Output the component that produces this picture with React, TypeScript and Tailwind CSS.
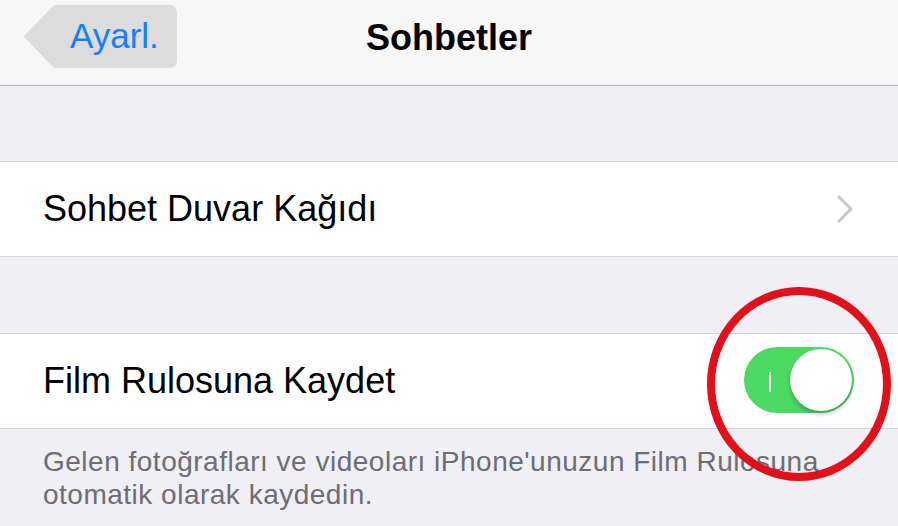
import React from "react";

export default function App() {
  return (
    <div
      className="relative w-[898px] h-[526px] overflow-hidden bg-[#efeff4]"
      style={{ fontFamily: '"Liberation Sans", Arial, sans-serif' }}
    >
      {/* Nav bar */}
      <div className="h-[86px] bg-[#f7f7f7] border-b border-[#b4b4b4] grid grid-cols-[1fr_auto_1fr] items-start pt-[5px]">
        <div className="pl-[22px]">
          <div className="relative w-[155px] h-[63px] flex items-center pl-[48px] pb-[2px]">
            <svg width="155" height="63" viewBox="0 0 155 63" className="absolute inset-0">
              <path
                d="M32 0 H147 Q155 0 155 8 V55 Q155 63 147 63 H32 L3 33 Q1 31.5 3 30 Z"
                fill="#dcdcdc"
              />
            </svg>
            <span className="relative text-[35px] leading-[40px] text-[#157efb]">Ayarl.</span>
          </div>
        </div>
        <span className="text-[36px] leading-[40px] font-bold text-black pt-[13px]">Sohbetler</span>
        <div />
      </div>

      <div className="flex flex-col pt-[75px] gap-[76px]">
        {/* Row 1 */}
        <div className="h-[96px] bg-white border-y border-[#d2d2d6] flex items-center justify-between pl-[43px] pr-[45px]">
          <span className="text-[36px] leading-[40px] text-black">Sohbet Duvar Kağıdı</span>
          <svg width="16" height="28" viewBox="0 0 16 28">
            <polyline
              points="2,2 14,14 2,26"
              fill="none"
              stroke="#c7c7cc"
              strokeWidth="3"
              strokeLinecap="round"
              strokeLinejoin="round"
            />
          </svg>
        </div>

        {/* Row 2 */}
        <div className="h-[96px] bg-white border-y border-[#d2d2d6] flex items-center justify-between pl-[43px] pr-[44px]">
          <span className="text-[36px] leading-[40px] text-black">Film Rulosuna Kaydet</span>
          <div className="relative w-[110px] h-[66px] rounded-full bg-[#4cd964] mt-[-2px] flex items-center justify-end pr-[2px]">
            <div className="absolute left-[25px] top-[25px] w-[2px] h-[20px] bg-white" />
            <div className="w-[62px] h-[62px] rounded-full bg-white shadow-[0_3px_4px_rgba(0,0,0,0.25)]" />
          </div>
        </div>
      </div>

      {/* Footer */}
      <div className="pl-[43px] pr-[40px] pt-[16px] text-[28px] leading-[33px] tracking-[0.5px] text-[#6d6d72]">
        Gelen fotoğrafları ve videoları iPhone'unuzun Film Rulosuna
        <br />
        otomatik olarak kaydedin.
      </div>

      {/* Red annotation circle */}
      <svg
        className="absolute left-[706px] top-[286px]"
        width="186"
        height="198"
        viewBox="0 0 186 198"
      >
        <ellipse cx="93" cy="98" rx="88" ry="93" fill="none" stroke="#e3101c" strokeWidth="8" />
      </svg>
    </div>
  );
}
